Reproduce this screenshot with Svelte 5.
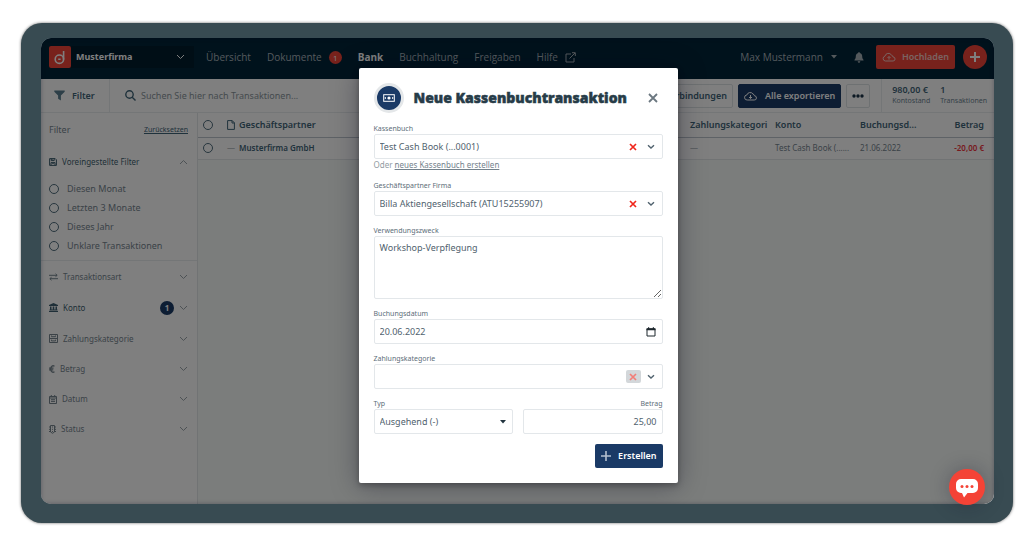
<script>
    const navItems = [
        { label: 'Übersicht' },
        { label: 'Dokumente', count: 1 },
        { label: 'Bank', active: true },
        { label: 'Buchhaltung' },
        { label: 'Freigaben' },
        { label: 'Hilfe', external: true }
    ];

    const presets = ['Diesen Monat', 'Letzten 3 Monate', 'Dieses Jahr', 'Unklare Transaktionen'];

    const sections = [
        { label: 'Transaktionsart', icon: 'arrows', tall: true },
        { label: 'Konto', icon: 'bank', tall: true, count: 1 },
        { label: 'Zahlungskategorie', icon: 'drawer', tall: true },
        { label: 'Betrag', icon: 'euro' },
        { label: 'Datum', icon: 'calendar' },
        { label: 'Status', icon: 'light' }
    ];

    let cashBook = $state('Test Cash Book (...0001)');
    let partner = $state('Billa Aktiengesellschaft (ATU15255907)');
    let purpose = $state('Workshop-Verpflegung');
    let date = $state('20.06.2022');
    let category = $state('');
    let type = $state('out');
    let amount = $state('25,00');
    let preset = $state('');
</script>

{#snippet chevron(up)}
    <svg class="chevron" class:up width="9" height="6" viewBox="0 0 9 6"><path d="M1 1l3.5 3.5L8 1" /></svg>
{/snippet}

{#snippet combo(id, clear, muted)}
    <button type="button" class="clear" class:muted aria-label="Leeren" onclick={clear}>
        <svg width="8" height="8" viewBox="0 0 8 8"><path d="M1 1l6 6M7 1L1 7" /></svg>
    </button>
    <button type="button" class="open" aria-label="Auswahl öffnen" aria-controls={id}>
        <svg width="8" height="6" viewBox="0 0 8 6"><path d="M1 1.2l3 2.8 3-2.8" /></svg>
    </button>
{/snippet}

<div class="frame">
    <div class="screen">
        <div class="page">
            <header>
                <button class="company">
                    <svg class="logo" width="22" height="22" viewBox="0 0 22 22">
                        <rect width="22" height="22" rx="2" fill="#f04438" stroke="none" />
                        <circle cx="10.4" cy="13.2" r="4.2" />
                        <path d="M14.6 5v8.5" />
                        <path d="M9.2 13.2h2.4" />
                    </svg>
                    <b>Musterfirma</b>
                    {@render chevron(false)}
                </button>
                <nav>
                    {#each navItems as item}
                        <a href="#top" class:active={item.active}>
                            {item.label}
                            {#if item.count}<span class="badge">{item.count}</span>{/if}
                            {#if item.external}
                                <svg width="11" height="11" viewBox="0 0 11 11"><path d="M6 2H1v8h8V6M4.500 6.500L10 1M7 .7h3.300V4" /></svg>
                            {/if}
                        </a>
                    {/each}
                </nav>
                <div class="account">
                    <button class="user">Max Mustermann <svg width="6" height="4" viewBox="0 0 6 4"><path d="M0 0h6L3 3.500z" /></svg></button>
                    <button class="bell" aria-label="Benachrichtigungen">
                        <svg width="10" height="11" viewBox="0 0 10 11"><path d="M5 0c.5 0 .8.3.8.9C7.500 1.300 8.200 2.700 8.200 4.200c0 2 .6 2.800 1.300 3.500v.8H.5v-.8c.7-.7 1.300-1.500 1.300-3.500C1.800 2.700 2.500 1.300 4.200.9 4.200.3 4.500 0 5 0zM3.700 9.200h2.600C6.300 10.100 5.700 10.700 5 10.700s-1.300-.6-1.300-1.500z" /></svg>
                    </button>
                    <button class="upload">
                        <svg width="14" height="10" viewBox="0 0 14 10"><path d="M3.300 9A2.500 2.500 0 0 1 3 4.100 3.500 3.500 0 0 1 9.400 3a2.600 2.600 0 0 1 1.700 2A2 2 0 0 1 11 9zM7 7.600V4.600M5.500 6L7 4.500 8.500 6" /></svg>
                        Hochladen
                    </button>
                    <button class="add" aria-label="Neu">
                        <svg width="10" height="10" viewBox="0 0 10 10"><path d="M5 0v10M0 5h10" /></svg>
                    </button>
                </div>
            </header>

            <div class="toolbar">
                <button class="filter">
                    <svg width="11" height="11" viewBox="0 0 11 11"><path d="M.3.500h10.400v1.300L6.900 5.500V10.500L4.100 8.800V5.500L.3 1.800z" /></svg>
                    Filter
                </button>
                <label class="search">
                    <svg width="11" height="11" viewBox="0 0 11 11"><circle cx="4.500" cy="4.500" r="3.700" /><path d="M7.200 7.200l3.300 3.300" /></svg>
                    <input type="search" aria-label="Suche" placeholder="Suchen Sie hier nach Transaktionen..." />
                </label>
                <div class="actions">
                    <button class="plain">Bankverbindungen</button>
                    <button class="export">
                        <svg width="13" height="10" viewBox="0 0 13 10"><path d="M3.300 9A2.500 2.500 0 0 1 2.800 4 3.500 3.500 0 0 1 9 3a2.600 2.600 0 0 1 1.500 1.800A2.100 2.100 0 0 1 10.200 9zM6.500 4v3.400M5 6l1.500 1.500L8 6" /></svg>
                        Alle exportieren
                    </button>
                    <button class="plain more" aria-label="Mehr">
                        <svg width="12" height="4" viewBox="0 0 12 4"><circle cx="2" cy="2" r="1.700" /><circle cx="6" cy="2" r="1.700" /><circle cx="10" cy="2" r="1.700" /></svg>
                    </button>
                </div>
                <dl>
                    <div><dd>980,00 €</dd><dt>Kontostand</dt></div>
                    <div><dd>1</dd><dt>Transaktionen</dt></div>
                </dl>
            </div>

            <div class="content">
                <aside>
                    <div class="aside-head">
                        <span>Filter</span>
                        <a href="#top">Zurücksetzen</a>
                    </div>
                    <button class="section on">
                        <svg width="8" height="8" viewBox="0 0 8 8"><path d="M.6.6h5.600l1.200 1.200v5.600H.6zM2.200.6v2h3v-2M2 7.300V4.600h4v2.700M3 1v1M3.300 5.500h1.400" /></svg>
                        <span>Voreingestellte Filter</span>
                        {@render chevron(true)}
                    </button>
                    <div class="presets">
                        {#each presets as name}
                            <label><input type="radio" name="preset" value={name} bind:group={preset} />{name}</label>
                        {/each}
                    </div>
                    {#each sections as section}
                        <button class="section" class:tall={section.tall} class:on={section.count}>
                            {#if section.icon === 'arrows'}
                                <svg width="9" height="8" viewBox="0 0 9 8"><path d="M0 2.300h8M6.500.8L8.200 2.300 6.500 3.700M9 5.700H1M2.500 4.300L.8 5.700l1.700 1.500" /></svg>
                            {:else if section.icon === 'bank'}
                                <svg class="solid" width="9" height="9" viewBox="0 0 9 9"><path d="M4.500 0L9 2v1H0V2zM1 3.500h1.500v3H1zM3.700 3.500h1.600v3H3.700zM6.500 3.500H8v3H6.500zM.5 6.500h8v1h-8zM0 8h9v1H0z" /></svg>
                            {:else if section.icon === 'drawer'}
                                <svg width="9" height="9" viewBox="0 0 9 9"><path d="M.5.5h8v8h-8zM.5 4.500h8M2.500 1.500v1.200h4V1.500M2.500 5.700v1.200h4V5.700" /></svg>
                            {:else if section.icon === 'euro'}
                                <svg class="bold" width="6" height="8" viewBox="0 0 6 8"><path d="M5.500 1.200C3.500.1 1.700 1.300 1.700 4s1.800 3.900 3.800 2.800M0 3.200h4.500M0 4.800h4.300" /></svg>
                            {:else if section.icon === 'calendar'}
                                <svg width="8" height="9" viewBox="0 0 8 9"><path d="M.5 1.500h7v7h-7zM.5 3h7M2.300 0v2M5.700 0v2M2 4.700h4M2 6.400h4" /></svg>
                            {:else}
                                <svg width="7" height="9" viewBox="0 0 7 9"><path d="M1.500.5h4V7q-2 2.500-4 0zM0 2h1.500M5.500 2H7M0 4.300h1.500M5.500 4.300H7M0 6.500h1.500M5.500 6.500H7M3 2h1M3 4.300h1M3 6.500h1" /></svg>
                            {/if}
                            <span>{section.label}</span>
                            {#if section.count}<b class="count">{section.count}</b>{/if}
                            {@render chevron(false)}
                        </button>
                    {/each}
                </aside>
                <main>
                    <table>
                        <colgroup>
                            <col class="c-check" /><col class="c-doc" /><col /><col class="c-mid" /><col class="c-mid" /><col class="c-date" /><col class="c-sum" />
                        </colgroup>
                        <thead>
                            <tr>
                                <th><input type="checkbox" aria-label="Alle auswählen" /></th>
                                <th><svg width="8" height="10" viewBox="0 0 8 10"><path d="M.6.6h4.600l2.200 2.200v6.600H.6zM5 .6V3h2.400" /></svg></th>
                                <th>Geschäftspartner</th>
                                <th>Zahlungskategori</th>
                                <th>Konto</th>
                                <th>Buchungsd...</th>
                                <th class="sum">Betrag</th>
                            </tr>
                        </thead>
                        <tbody>
                            <tr>
                                <td><input type="checkbox" aria-label="Musterfirma GmbH" /></td>
                                <td class="dim">—</td>
                                <td class="name">Musterfirma GmbH</td>
                                <td class="dim">—</td>
                                <td>Test Cash Book (......</td>
                                <td>21.06.2022</td>
                                <td class="sum negative">-20,00 €</td>
                            </tr>
                        </tbody>
                    </table>
                </main>
            </div>
        </div>

        <div class="backdrop">
            <form class="modal" onsubmit={e => e.preventDefault()}>
                <div class="title">
                    <span class="emblem">
                        <svg width="12" height="8" viewBox="0 0 12 8"><rect x=".7" y=".7" width="10.600" height="6.600" /><circle cx="6" cy="4" r="1.600" /><path d="M2.300 3v2M9.700 3v2" /></svg>
                    </span>
                    <h1>Neue Kassenbuchtransaktion</h1>
                    <button type="button" class="close" aria-label="Schließen">
                        <svg width="10" height="10" viewBox="0 0 10 10"><path d="M1 1l8 8M9 1L1 9" /></svg>
                    </button>
                </div>

                <div class="field">
                    <label for="cashbook">Kassenbuch</label>
                    <div class="control">
                        <input id="cashbook" bind:value={cashBook} />
                        {@render combo('cashbook', () => (cashBook = ''), false)}
                    </div>
                    <p>Oder <a href="#top">neues Kassenbuch erstellen</a></p>
                </div>
                <div class="field">
                    <label for="partner">Geschäftspartner Firma</label>
                    <div class="control">
                        <input id="partner" bind:value={partner} />
                        {@render combo('partner', () => (partner = ''), false)}
                    </div>
                </div>
                <div class="field">
                    <label for="purpose">Verwendungszweck</label>
                    <textarea id="purpose" bind:value={purpose}></textarea>
                </div>
                <div class="field">
                    <label for="date">Buchungsdatum</label>
                    <div class="control">
                        <input id="date" bind:value={date} />
                        <button type="button" class="pick" aria-label="Kalender öffnen">
                            <svg width="10" height="10" viewBox="0 0 10 10"><path d="M1 2h8v7H1z" /><path class="fill" d="M.5 1.200h9v2h-9zM2 .2h1.200v1.500H2zM6.800.2H8v1.500H6.800z" /></svg>
                        </button>
                    </div>
                </div>
                <div class="field">
                    <label for="category">Zahlungskategorie</label>
                    <div class="control">
                        <input id="category" bind:value={category} />
                        {@render combo('category', () => (category = ''), true)}
                    </div>
                </div>
                <div class="pair">
                    <div class="field">
                        <label for="type">Typ</label>
                        <div class="control">
                            <select id="type" bind:value={type}>
                                <option value="out">Ausgehend (-)</option>
                                <option value="in">Eingehend (+)</option>
                            </select>
                            <svg class="caret" width="6" height="4" viewBox="0 0 6 4"><path d="M0 0h6L3 3.500z" /></svg>
                        </div>
                    </div>
                    <div class="field right">
                        <label for="amount">Betrag</label>
                        <div class="control">
                            <input id="amount" bind:value={amount} />
                        </div>
                    </div>
                </div>
                <button class="submit">
                    <svg width="10" height="10" viewBox="0 0 10 10"><path d="M5 0v10M0 5h10" /></svg>
                    Erstellen
                </button>
            </form>
        </div>
    </div>

    <button class="chat" aria-label="Chat">
        <svg width="22" height="19" viewBox="0 0 22 19">
            <path d="M5 0h12a5 5 0 0 1 5 5v4a5 5 0 0 1-5 5h-5.500L8 18.500 6 14H5a5 5 0 0 1-5-5V5a5 5 0 0 1 5-5z" fill="#fff" />
            <g fill="#f44336"><circle cx="6" cy="7.500" r="1.500" /><circle cx="11" cy="7.500" r="1.500" /><circle cx="16" cy="7.500" r="1.500" /></g>
        </svg>
    </button>
</div>

<style>
    :global(body) {
        background: #fff;
        overflow: hidden;
    }

    .frame {
        position: relative;
        margin: 23px 11px 14px 21px;
        padding: 15px 19px 19px 20px;
        border-radius: 21px;
        background: #384b52;
        box-shadow: 0 0 3px rgba(0, 0, 0, 0.6);
        font: 9px/14px "Noto Sans", "Open Sans", sans-serif;
        color: #3e6478;
    }

    .frame *, .frame {
        box-sizing: border-box;
    }

    svg {
        flex: none;
        fill: none;
        stroke: currentColor;
    }

    button, input, select, textarea {
        margin: 0;
        padding: 0;
        border: 0;
        background: none;
        font: inherit;
        color: inherit;
    }

    button {
        display: flex;
        align-items: center;
        white-space: nowrap;
    }

    a {
        color: inherit;
    }

    /* page and backdrop share one grid cell */
    .screen {
        display: grid;
        min-height: calc(100vh - 71px);
        border-radius: 10px;
        overflow: hidden;
    }

    .page, .backdrop {
        grid-area: 1 / 1;
        min-width: 0;
    }

    .page {
        display: flex;
        flex-direction: column;
        background: #fff;
    }

    header {
        display: flex;
        align-items: center;
        height: 41px;
        padding: 0 7px 3px 8px;
        background: #002438;
        color: #a8b2b8;
    }

    .company {
        width: 145px;
        margin-right: 12px;
        gap: 5px;
        background: #001c2c;
        color: #fff;
    }

    .company b {
        flex: 1;
        text-align: left;
    }

    .company .chevron {
        margin-right: 9px;
        stroke: #fff;
    }

    .logo {
        stroke: #fff;
        stroke-width: 1.6;
    }

    nav {
        display: flex;
        gap: 16px;
    }

    nav a, .user {
        font-family: "Open Sans", "Noto Sans", sans-serif;
        font-size: 10px;
    }

    nav a {
        display: flex;
        align-items: center;
        gap: 7px;
        text-decoration: none;
    }

    nav .active {
        font-weight: 700;
        color: #fff;
    }

    .badge {
        width: 13px;
        border-radius: 7px;
        background: #f04438;
        text-align: center;
        font-size: 8px;
        line-height: 13px;
        color: #fff;
    }

    .account {
        display: flex;
        align-items: center;
        margin-left: auto;
    }

    .user {
        gap: 8px;
    }

    .user svg, .bell svg {
        fill: currentColor;
        stroke: none;
    }

    .bell {
        margin: 0 12px 0 17px;
    }

    .upload {
        height: 24px;
        gap: 6px;
        padding: 0 6px;
        border-radius: 2px;
        background: #f04438;
        font-weight: 600;
        color: #f4c8c4;
    }

    .add {
        width: 24px;
        height: 24px;
        margin-left: 8px;
        justify-content: center;
        border-radius: 50%;
        background: #f04438;
        color: #fff;
    }

    .add svg {
        stroke-width: 2;
    }

    .toolbar {
        display: flex;
        height: 34px;
        border-bottom: 1px solid #e8ecee;
    }

    .filter {
        width: 69px;
        gap: 7px;
        padding-left: 13px;
        border-right: 1px solid #e8ecee;
        font-weight: 600;
    }

    .filter svg {
        fill: #5a7f90;
        stroke: none;
    }

    .search {
        display: flex;
        flex: 1;
        align-items: center;
        gap: 5px;
        min-width: 0;
        padding-left: 15px;
    }

    .search input {
        flex: 1;
        min-width: 0;
        outline: 0;
    }

    .search svg {
        stroke-width: 1.4;
    }

    .search input::placeholder {
        color: #8a959c;
    }

    .actions {
        display: flex;
        align-items: center;
        gap: 5px;
        padding-right: 11px;
        border-right: 1px solid #e8ecee;
    }

    .plain, .export {
        height: 24px;
        padding: 0 5px;
        border: 1px solid #dde2e5;
        border-radius: 2px;
    }

    .plain {
        font-weight: 600;
    }

    .export {
        gap: 8px;
        border-color: #1a3a66;
        background: #1a3a66;
        font-weight: 600;
        color: #fff;
    }

    .more svg {
        fill: #1a3346;
        stroke: none;
    }

    dl {
        display: flex;
        gap: 10px;
        margin: 0;
        padding: 5px 7px 0 10px;
    }

    dd {
        margin: 0;
        font-weight: 600;
        line-height: 12px;
    }

    dt {
        font-size: 7px;
        line-height: 9px;
        color: #6c8290;
    }

    .content {
        display: flex;
        flex: 1;
    }

    aside {
        flex: none;
        width: 157px;
        padding: 0 9px 0 8px;
        border-right: 1px solid #e2e6e8;
        color: #76858f;
    }

    .aside-head {
        display: flex;
        align-items: center;
        justify-content: space-between;
        height: 34px;
    }

    .aside-head a {
        font-size: 7px;
        color: #3e6478;
    }

    .section {
        width: 100%;
        height: 30px;
        gap: 5px;
        font-size: 8px;
    }

    .section.tall {
        height: 31px;
    }

    .section span {
        flex: 1;
        text-align: left;
    }

    .section.on {
        color: #3e5f70;
    }

    .section .solid {
        fill: currentColor;
        stroke: none;
    }

    .section .bold {
        stroke-width: 1.3;
    }

    .chevron {
        stroke: #9aa4ab;
        stroke-width: 1;
    }

    .chevron.up {
        transform: rotate(180deg);
    }

    .count {
        width: 14px;
        border-radius: 7px;
        background: #1a3a66;
        text-align: center;
        font-size: 8px;
        line-height: 14px;
        color: #fff;
    }

    .presets {
        margin: 0 -9px 0 -8px;
        padding: 2px 8px 5px;
        border-bottom: 1px solid #e8ecee;
    }

    .presets label {
        display: flex;
        align-items: center;
        gap: 8px;
        height: 19px;
    }

    input[type="radio"], input[type="checkbox"] {
        appearance: none;
        display: block;
        width: 10px;
        height: 10px;
        border: 1px solid #4f6c7c;
        border-radius: 50%;
    }

    input:checked {
        background: #1a3a66;
    }

    main {
        flex: 1;
        min-width: 0;
        background: #f6faf8;
    }

    table {
        width: 100%;
        table-layout: fixed;
        border-collapse: collapse;
        background: #fff;
    }

    .c-check {
        width: 29px;
    }

    .c-doc {
        width: 12px;
    }

    .c-mid {
        width: 85px;
    }

    .c-date {
        width: 70px;
    }

    .c-sum {
        width: 64px;
    }

    th, td {
        padding: 0;
        text-align: left;
        white-space: nowrap;
    }

    th {
        height: 24px;
        border-bottom: 1px solid #bcc4cc;
        font-weight: 600;
    }

    td {
        height: 22px;
        border-bottom: 1px solid #e2e6e8;
        font-size: 8px;
        color: #76858f;
    }

    th:first-child, td:first-child {
        padding-left: 5px;
    }

    th svg {
        display: block;
    }

    td.name {
        font-weight: 600;
        color: #3e6478;
    }

    td.dim {
        color: #a8b0b6;
    }

    th.sum, td.sum {
        padding-right: 10px;
        text-align: right;
    }

    td.negative {
        font-weight: 600;
        color: #f0343c;
    }

    .backdrop {
        position: relative;
        display: flex;
        align-items: flex-start;
        justify-content: center;
        padding: 30px 0 21px 1px;
        background: rgba(0, 0, 0, 0.5);
        box-shadow: inset 0 0 4px rgba(0, 0, 30, 0.3);
    }

    .modal {
        display: flex;
        flex-direction: column;
        gap: 10px;
        width: 319px;
        padding: 15px;
        border-radius: 2px;
        background: #fff;
        box-shadow: 0 3px 28px rgba(10, 10, 30, 0.35), 0 2px 6px rgba(0, 0, 0, 0.3);
        color: #50626e;
    }

    .title {
        display: flex;
        align-items: center;
        gap: 10px;
        margin-bottom: 1px;
    }

    .emblem {
        display: flex;
        align-items: center;
        justify-content: center;
        width: 30px;
        height: 30px;
        border: 3px solid #e4e7e9;
        border-radius: 50%;
        background: #1a3a66;
        color: #fff;
    }

    .emblem circle {
        fill: #fff;
        stroke: none;
    }

    h1 {
        flex: 1;
        margin: 0;
        font-size: 14px;
        font-weight: 900;
        line-height: 20px;
        white-space: nowrap;
        color: #273c48;
        -webkit-text-stroke: 0.5px #273c48;
    }

    .close {
        margin-right: 5px;
        color: #6b7780;
    }

    .close svg {
        stroke-width: 1.8;
    }

    .field {
        display: flex;
        flex: 1;
        flex-direction: column;
        min-width: 0;
    }

    .field label {
        font-size: 7px;
        line-height: 10px;
        color: #5d6e79;
    }

    .control {
        display: flex;
        align-items: center;
        height: 25px;
    }

    .control, textarea {
        border: 1px solid #e3e7ea;
        border-radius: 2px;
    }

    .control input, select {
        flex: 1;
        min-width: 0;
        height: 23px;
        padding: 0 5px;
        outline: 0;
    }

    textarea {
        height: 63px;
        padding: 4px 5px;
        outline: 0;
        resize: vertical;
    }

    select {
        appearance: none;
    }

    .caret {
        margin-right: 6px;
        fill: #22343f;
        stroke: none;
        pointer-events: none;
    }

    .clear {
        width: 15px;
        height: 13px;
        justify-content: center;
        border-radius: 2px;
        color: #f0271c;
    }

    .clear svg {
        stroke-width: 1.7;
    }

    .clear.muted {
        background: #d3d7da;
        color: #f27e78;
    }

    .open {
        margin: 0 7px 0 6px;
    }

    .open svg {
        stroke-width: 1.4;
    }

    .pick {
        margin-right: 6px;
        color: #1c262c;
    }

    .pick .fill {
        fill: currentColor;
        stroke: none;
    }

    .field p {
        margin: 0;
        font-size: 8px;
        line-height: 12px;
        color: #919ba2;
    }

    .field p a {
        color: #74828c;
    }

    .pair {
        display: flex;
        gap: 10px;
    }

    .right label, .right input {
        text-align: right;
    }

    .submit {
        align-self: flex-end;
        height: 24px;
        gap: 7px;
        padding: 0 6px;
        border-radius: 2px;
        background: #1a3a66;
        font-weight: 600;
        color: #fff;
    }

    .submit svg {
        stroke: #b4c0cf;
        stroke-width: 1.6;
    }

    .chat {
        position: absolute;
        right: 28px;
        bottom: 18px;
        width: 36px;
        height: 36px;
        justify-content: center;
        border-radius: 50%;
        background: #f44336;
        box-shadow: 0 0 20px rgba(20, 20, 40, 0.3);
    }

    .chat svg {
        margin-top: 3px;
        stroke: none;
    }
</style>
